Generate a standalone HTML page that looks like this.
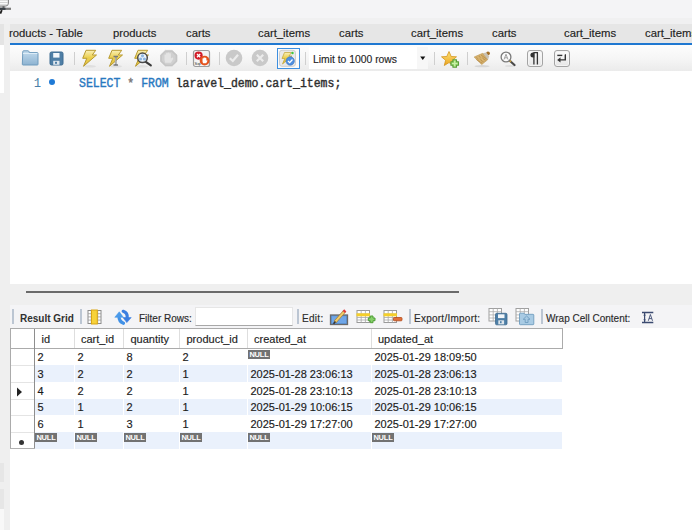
<!DOCTYPE html>
<html><head><meta charset="utf-8">
<style>
*{margin:0;padding:0;box-sizing:border-box}
html,body{width:692px;height:530px;overflow:hidden;background:#fff;font-family:"Liberation Sans",sans-serif;color:#222}
.a{position:absolute}
.t{position:absolute;white-space:pre;line-height:1;-webkit-text-stroke:.15px}
.sep{position:absolute;width:1px;background:#cfcfcf}
.null{position:absolute;width:22px;height:9px;background:#727272;color:#fff;font-size:7.5px;font-weight:bold;line-height:9px;text-align:center;letter-spacing:-.2px}
.rsep{position:absolute;width:2px;background:#bcc6d3}
</style></head><body>
<!-- top area -->
<div class="a" style="left:0;top:0;width:692px;height:18px;background:#f4f4f6"></div>
<div class="a" style="left:0;top:18px;width:692px;height:6px;background:#f0f0f1"></div>
<svg class="a" style="left:0;top:0" width="14" height="14" viewBox="0 0 14 14">
 <rect x="-4" y="-4" width="12.5" height="10.2" rx="3.2" fill="#d4d4d4" stroke="#8c8c8c" stroke-width="1"/>
 <path d="M-3 1.4 H7.5 M-3 3.6 H7.5" stroke="#fafafa" stroke-width="1.1"/>
 <rect x="2.5" y="6.3" width="2" height="1.6" fill="#5a5a5a"/>
 <rect x="0" y="7.7" width="11" height="2.2" fill="#7c7c7c"/>
 <rect x="0" y="7.7" width="5.5" height="2.2" fill="#3b4147"/>
 <path d="M0.3 13.6 L1.8 10.2" stroke="#1e1e1e" stroke-width="1.9"/>
</svg>
<!-- left strip -->
<div class="a" style="left:0;top:24px;width:10px;height:506px;background:#efefef"></div>
<div class="a" style="left:0;top:24px;width:4px;height:21px;background:#e4e4e4"></div>
<div class="a" style="left:0;top:45px;width:4px;height:48px;background:#fff"></div>
<div class="a" style="left:0;top:463px;width:4px;height:19px;background:#e6e6e6"></div>
<div class="a" style="left:0;top:489px;width:4px;height:20px;background:#e6e6e6"></div>
<div class="a" style="left:0;top:509px;width:4px;height:21px;background:#f8f8f8"></div>
<!-- tab bar -->
<div class="a" style="left:10px;top:24px;width:682px;height:19px;background:#e6e6e6"></div>
<div class="t" style="left:9px;top:28px;font-size:11.3px;color:#222">roducts - Table</div>
<div class="t" style="left:113px;top:28px;font-size:11.3px;color:#222">products</div>
<div class="t" style="left:186px;top:28px;font-size:11.3px;color:#222">carts</div>
<div class="t" style="left:258px;top:28px;font-size:11.3px;color:#222">cart_items</div>
<div class="t" style="left:339px;top:28px;font-size:11.3px;color:#222">carts</div>
<div class="t" style="left:411px;top:28px;font-size:11.3px;color:#222">cart_items</div>
<div class="t" style="left:492px;top:28px;font-size:11.3px;color:#222">carts</div>
<div class="t" style="left:564px;top:28px;font-size:11.3px;color:#222">cart_items</div>
<div class="t" style="left:645px;top:28px;font-size:11.3px;color:#222">cart_items</div>
<div class="a" style="left:10px;top:43px;width:682px;height:2px;background:#1f78d1"></div>
<!-- sql toolbar -->
<div class="a" style="left:10px;top:45px;width:682px;height:26px;background:linear-gradient(#fdfdfd,#f6f6f6 50%,#ebebeb)"></div>
<!-- folder -->
<svg class="a" style="left:20px;top:49px" width="20" height="18" viewBox="0 0 20 18">
 <defs><linearGradient id="gf" x1="0" y1="0" x2="0" y2="1"><stop offset="0" stop-color="#c4dcee"/><stop offset="1" stop-color="#8db3d1"/></linearGradient></defs>
 <path d="M2.8 2.5 Q2.8 1.8 3.5 1.8 H8 Q8.8 1.8 9 2.6 L9.3 3.6 H17.3 Q18 3.6 18 4.3 V15.3 Q18 16 17.3 16 H3 Q2.3 16 2.3 15.3 Z" fill="url(#gf)" stroke="#6e9bbd" stroke-width="1"/>
 <path d="M3 4.5 H17.3" stroke="#dcecf7" stroke-width="1"/>
</svg>
<!-- floppy -->
<svg class="a" style="left:49px;top:51px" width="15" height="15" viewBox="0 0 15 15">
 <rect x="1" y="1" width="13" height="13" rx="1.5" fill="#4f7fa6" stroke="#3f6d92" stroke-width="1"/>
 <rect x="4.2" y="2" width="6.3" height="4.6" fill="#f4f8fb"/>
 <rect x="4.2" y="9.8" width="6.3" height="4" fill="#dfe7ee"/>
 <rect x="6" y="10.8" width="2" height="2" fill="#4f7fa6"/>
</svg>
<div class="sep" style="left:74px;top:52px;height:13px"></div>
<!-- bolts -->
<svg width="0" height="0" style="position:absolute">
 <defs>
  <linearGradient id="gb" x1="0" y1="0" x2="0" y2="1"><stop offset="0" stop-color="#faf0b8"/><stop offset=".45" stop-color="#ecd050"/><stop offset="1" stop-color="#e2c040"/></linearGradient>
  <linearGradient id="gs" x1="0" y1="0" x2="0" y2="1"><stop offset="0" stop-color="#dfe3e8"/><stop offset="1" stop-color="#fbfbfb"/></linearGradient>
 </defs>
</svg>
<svg class="a" style="left:80px;top:48px" width="20" height="20" viewBox="0 0 20 20">
 <ellipse cx="10" cy="18.3" rx="6" ry="1.2" fill="#d8d8d8" opacity=".7"/>
 <path d="M6 2.3 H15.7 L12.3 7 H16.5 L3.5 18.3 L6.8 10.3 H2.7 Z" fill="url(#gb)" stroke="#b89a30" stroke-width="1" stroke-linejoin="round"/>
</svg>
<svg class="a" style="left:106px;top:48px" width="20" height="20" viewBox="0 0 20 20">
 <ellipse cx="10" cy="18.3" rx="6" ry="1.2" fill="#d8d8d8" opacity=".7"/>
 <path d="M6 2.3 H15.7 L12.3 7 H16.5 L3.5 18.3 L6.8 10.3 H2.7 Z" fill="url(#gb)" stroke="#b89a30" stroke-width="1" stroke-linejoin="round"/>
 <path d="M7.5 8.5 H12 M9.75 8.5 V17 M7.5 17 H12" stroke="#7a7a7a" stroke-width="1.6"/>
 <path d="M9.75 9.5 V16" stroke="#d0d0d0" stroke-width=".8"/>
</svg>
<svg class="a" style="left:132px;top:48px" width="22" height="20" viewBox="0 0 22 20">
 <ellipse cx="10" cy="18.3" rx="6" ry="1.2" fill="#d8d8d8" opacity=".7"/>
 <path d="M6 2.3 H15.7 L12.3 7 H16.5 L3.5 18.3 L6.8 10.3 H2.7 Z" fill="url(#gb)" stroke="#b89a30" stroke-width="1" stroke-linejoin="round"/>
 <path d="M13.8 13.8 L18.8 17.3" stroke="#3c3c3c" stroke-width="2.2" stroke-linecap="round"/>
 <circle cx="10.5" cy="9.8" r="4.8" fill="#eef4fa" stroke="#4a4a4a" stroke-width="1.5"/>
 <circle cx="8.6" cy="11" r="1.6" fill="#8fb8e2"/><circle cx="12.4" cy="11" r="1.6" fill="#8fb8e2"/><circle cx="10.5" cy="7.8" r="1.6" fill="#8fb8e2"/>
</svg>
<!-- stop gray -->
<svg class="a" style="left:159px;top:49px" width="20" height="18" viewBox="0 0 20 18">
 <path d="M6.3 1.4 H13.2 L18 6.1 V12.4 L13.2 17 H6.3 L1.5 12.4 V6.1 Z" fill="#c6c6c6" stroke="#c0c0c0" stroke-width=".6" stroke-linejoin="round"/>
 <path d="M6.8 2.9 H12.7 L16.5 6.7 V11.8 L12.7 15.5 H6.8 L3 11.8 V6.7 Z" fill="#d0d0d0"/>
 <path d="M6.2 13.8 Q5.2 11 5.5 8.3 V5.8 Q6.3 5 7.1 5.8 V4.3 Q7.9 3.6 8.7 4.3 V3.9 Q9.5 3.3 10.3 3.9 V4.5 Q11.1 3.9 11.9 4.6 V9.6 L13.3 8.6 Q14.5 8.5 14.2 9.9 L11.9 13.8 Z" fill="#e4e4e4"/>
</svg>
<div class="sep" style="left:186px;top:52px;height:13px"></div>
<!-- stop on error toggle -->
<svg class="a" style="left:192px;top:49px" width="20" height="19" viewBox="0 0 20 19">
 <rect x="1.5" y="1.5" width="16" height="16" rx="2" fill="#f4f4f4" stroke="#9c9c9c" stroke-width="1.2"/>
 <text x="2.6" y="16" font-size="4.2" font-family="Liberation Sans" fill="#333">Sql</text>
 <circle cx="6.6" cy="6.6" r="4.1" fill="#d21e2a"/>
 <path d="M5 5 L8.2 8.2 M8.2 5 L5 8.2" stroke="#fff" stroke-width="1.3"/>
 <circle cx="12.6" cy="11.6" r="4.9" fill="#e4521c"/>
 <path d="M11 14.3 Q10.3 12.5 10.5 11 V9.6 Q11 9.1 11.5 9.6 V8.8 Q12 8.3 12.5 8.8 V8.6 Q13 8.2 13.5 8.6 V9.1 Q14 8.7 14.4 9.2 V11.8 L15 11.3 Q15.6 11.3 15.4 12 L14.2 14.3 Z" fill="#fff"/>
</svg>
<div class="sep" style="left:219px;top:52px;height:13px"></div>
<svg class="a" style="left:224px;top:48px" width="20" height="20" viewBox="0 0 20 20">
 <circle cx="10" cy="10" r="8.3" fill="#c9c9c9"/>
 <path d="M5.8 10.3 L8.8 13 L14 6.8" stroke="#ececec" stroke-width="2.2" fill="none"/>
</svg>
<svg class="a" style="left:250px;top:48px" width="20" height="20" viewBox="0 0 20 20">
 <circle cx="10" cy="10" r="8.3" fill="#c9c9c9"/>
 <path d="M6.8 6.8 L13.2 13.2 M13.2 6.8 L6.8 13.2" stroke="#ececec" stroke-width="2.2"/>
</svg>
<!-- autocommit -->
<div class="a" style="left:277px;top:48px;width:23px;height:21px;border:1.5px solid #3d8fe0;background:#fafafa"></div>
<svg class="a" style="left:278px;top:49px" width="20" height="19" viewBox="0 0 20 19">
 <rect x="1.5" y="1.3" width="16" height="16" rx="2.5" fill="#e9e9e9" stroke="#cfcfcf" stroke-width="1"/>
 <path d="M6.5 3.5 H13.5 L11 7 H14 L4.5 15 L6.8 9.5 H4 Z" fill="url(#gb)" stroke="#c0a030" stroke-width=".7"/>
 <circle cx="14.5" cy="4" r="1.2" fill="#3cc83c"/>
 <circle cx="12.2" cy="12" r="4.2" fill="#4f8fe0" stroke="#3a74c0" stroke-width=".6"/>
 <path d="M10 12 L11.7 13.6 L14.5 10.5" stroke="#fff" stroke-width="1.3" fill="none"/>
</svg>
<div class="sep" style="left:305px;top:52px;height:13px"></div>
<!-- limit combo -->
<div class="a" style="left:309px;top:47px;width:119px;height:22px;background:#fff"></div>
<div class="a" style="left:417px;top:47px;width:11px;height:22px;background:#f7f7f7"></div>
<div class="t" style="left:313px;top:54px;font-size:11.5px;color:#1e1e1e;transform-origin:0 0;transform:scaleX(.9)">Limit to 1000 rows</div>
<svg class="a" style="left:420px;top:56px" width="6" height="5" viewBox="0 0 6 5"><path d="M0.2 0.5 H5.3 L2.75 4 Z" fill="#111"/></svg>
<div class="sep" style="left:434px;top:52px;height:13px"></div>
<!-- star add -->
<svg class="a" style="left:440px;top:49px" width="22" height="20" viewBox="0 0 22 20">
 <defs><linearGradient id="gst" x1="0" y1="0" x2="0" y2="1"><stop offset="0" stop-color="#fde57a"/><stop offset="1" stop-color="#eba21c"/></linearGradient></defs>
 <path d="M9 2.5 L11.2 7.5 L16.5 7.8 L12.4 11.3 L13.8 16.5 L9 13.6 L4.3 16.5 L5.6 11.3 L1.5 7.8 L6.8 7.5 Z" fill="url(#gst)" stroke="#d4941a" stroke-width=".8" stroke-linejoin="round"/>
 <path d="M10.9 12.7 H12.9 V10.7 H16.5 V12.7 H18.5 V16.3 H16.5 V18.3 H12.9 V16.3 H10.9 Z" fill="#9ad870" stroke="#5b9e3c" stroke-width="1.1" stroke-linejoin="round"/><path d="M14.7 11.8 V17.2 M12 14.5 H17.4" stroke="#c8f0a8" stroke-width="1.2"/>
</svg>
<div class="sep" style="left:467px;top:52px;height:13px"></div>
<!-- broom -->
<svg class="a" style="left:472px;top:49px" width="20" height="19" viewBox="0 0 20 19">
 <ellipse cx="10" cy="17.2" rx="7.5" ry="1.1" fill="#cfcfcf" opacity=".8"/>
 <circle cx="16" cy="4.3" r="1.9" fill="#a46f26"/>
 <path d="M10.5 4.2 L14.2 3.6 L17.2 7.2 L15.8 11.2 Z" fill="#c9c2b4"/>
 <path d="M2.1 8 L10.6 4.3 L15.6 10.8 L9.7 15.6 Z" fill="#d3ad68" stroke="#c09a58" stroke-width=".6" stroke-linejoin="round"/>
 <path d="M4.5 8.5 L11.5 12.8 M7 7 L13.6 11.2 M4.3 10.5 L10.3 14.3 M9 6 L14.5 10" stroke="#b48a48" stroke-width=".7"/>
 <path d="M5.5 7.7 L8.7 12.5 M8.2 6.2 L11.2 11.8" stroke="#e8c888" stroke-width=".6"/>
</svg>
<!-- magnifier -->
<svg class="a" style="left:499px;top:49px" width="19" height="19" viewBox="0 0 19 19">
 <ellipse cx="11" cy="17" rx="5" ry="1" fill="#d8d8d8" opacity=".7"/>
 <path d="M10.5 11.5 L15.5 16" stroke="#4a4a4a" stroke-width="2.2" stroke-linecap="round"/>
 <path d="M10.5 11.5 L12 12.8" stroke="#c8a040" stroke-width="2"/>
 <circle cx="7" cy="8" r="4.9" fill="#fbfbfb" stroke="#7a7a7a" stroke-width="1.3"/>
 <path d="M5 10.5 L7 5.2 L9 10.5 M5.8 8.8 H8.2" stroke="#999" stroke-width=".9" fill="none"/>
</svg>
<!-- pilcrow -->
<div class="a" style="left:527px;top:50px;width:16px;height:17px;border:1px solid #a4a4a4;border-radius:3px;background:linear-gradient(#fcfcfc,#e6e6e6);box-shadow:inset 0 0 0 1px #f4f4f4"></div>
<svg class="a" style="left:527px;top:50px" width="16" height="17" viewBox="0 0 16 17">
 <path d="M7.3 2.5 H6 Q3.4 2.5 3.4 5 Q3.4 7.5 6 7.5 H7.3 Z" fill="#333"/>
 <path d="M6.9 2.5 V14.5 M10.4 2.5 V14.5 M6.5 2.6 H11" stroke="#333" stroke-width="1.3"/>
</svg>
<!-- wrap -->
<div class="a" style="left:554px;top:50px;width:16px;height:17px;border:1px solid #a4a4a4;border-radius:3px;background:linear-gradient(#fcfcfc,#e6e6e6);box-shadow:inset 0 0 0 1px #f4f4f4"></div>
<svg class="a" style="left:554px;top:50px" width="16" height="17" viewBox="0 0 16 17">
 <path d="M3.3 5.4 H8.3" stroke="#333" stroke-width="1.4"/>
 <path d="M10.8 5 H11.3 V9.9 H5.5" stroke="#333" stroke-width="1.4" fill="none"/>
 <path d="M3.2 9.9 L6.5 7.3 V12.5 Z" fill="#333"/>
</svg>
<!-- editor -->
<div class="a" style="left:10px;top:71px;width:682px;height:213px;background:#fff"></div>
<div class="t" style="left:34px;top:78px;font-size:12.5px;font-family:'Liberation Mono';color:#4a7fa8;transform-origin:0 0;transform:scaleX(.92)">1</div>
<div class="a" style="left:49px;top:79px;width:6px;height:6px;border-radius:50%;background:#1f7ad6"></div>
<div class="t" style="left:79px;top:78px;font-size:12.5px;font-family:'Liberation Mono';color:#2e2e2e;-webkit-text-stroke:.4px;transform-origin:0 0;transform:scaleX(.92)"><span style="color:#2878c0">SELECT</span> <span style="color:#777">*</span> <span style="color:#2878c0">FROM</span> laravel_demo.cart_items;</div>
<!-- splitter -->
<div class="a" style="left:10px;top:284px;width:682px;height:21px;background:#efefef"></div>
<div class="a" style="left:26px;top:291px;width:433px;height:2px;background:#6a6a6a"></div>
<!-- result toolbar -->
<div class="a" style="left:10px;top:305px;width:682px;height:23px;background:#f4f4f6"></div>
<div class="rsep" style="left:12px;top:309px;height:15px"></div>
<div class="t" style="left:20px;top:314px;font-size:10px;font-weight:bold;color:#303030;-webkit-text-stroke:0">Result Grid</div>
<div class="rsep" style="left:80px;top:309px;height:15px"></div>
<!-- grid icon -->
<svg class="a" style="left:87px;top:309px" width="15" height="16" viewBox="0 0 15 16">
 <rect x="1" y="1.5" width="13" height="13" fill="#fff" stroke="#8c8c8c" stroke-width="1"/>
 <path d="M1 4.7 H14 M1 7.9 H14 M1 11.1 H14 M4.3 1.5 V14.5 M10.7 1.5 V14.5" stroke="#9a9a9a" stroke-width=".8"/>
 <rect x="4.5" y="1" width="5.8" height="14" fill="#f7d23a" stroke="#d9a514" stroke-width="1"/>
</svg>
<!-- refresh -->
<svg class="a" style="left:110px;top:306px" width="26" height="22" viewBox="0 0 26 22">
 <path d="M9 10 Q8.8 15.5 13.5 17.3" stroke="#4191e6" stroke-width="3.2" fill="none" stroke-linecap="round"/>
 <path d="M9.3 5.8 L4.8 11.3 L13.3 11.3 Z" fill="#4a9aea" stroke="#4a9aea" stroke-width=".6" stroke-linejoin="round"/>
 <path d="M13.2 5.3 Q17.8 6.8 17.2 12" stroke="#3a7ee0" stroke-width="3.2" fill="none" stroke-linecap="round"/>
 <path d="M13 11.6 L21.2 11.6 L16.8 16.6 Z" fill="#3a7ee0" stroke="#3a7ee0" stroke-width=".6" stroke-linejoin="round"/>
</svg>
<div class="t" style="left:139px;top:314px;font-size:10px;color:#2a2a2a">Filter Rows:</div>
<div class="a" style="left:195px;top:307px;width:98px;height:19px;background:#fff;border:1px solid #e6e6e6;border-bottom:1px solid #a8a8a8"></div>
<div class="rsep" style="left:297px;top:309px;height:15px"></div>
<div class="t" style="left:302px;top:314px;font-size:10px;color:#2a2a2a;letter-spacing:.3px">Edit:</div>
<!-- edit pencil -->
<svg class="a" style="left:329px;top:308px" width="20" height="18" viewBox="0 0 20 18">
 <rect x="1.5" y="7" width="17" height="9.5" fill="#5b94d8" stroke="#6a6a6a" stroke-width="1.3"/>
 <rect x="3" y="8.3" width="14" height="6.8" fill="#6fa6e8"/>
 <path d="M6 14 L15.5 3.3" stroke="#a0782a" stroke-width="3.2"/>
 <path d="M6 14 L15.5 3.3" stroke="#f2cc6a" stroke-width="2"/>
 <path d="M14.8 4 L16.3 2.4" stroke="#e03a3a" stroke-width="3"/>
 <path d="M4.5 15.8 L6.5 13.5" stroke="#333" stroke-width="1.6"/>
</svg>
<!-- add row -->
<svg class="a" style="left:355px;top:309px" width="22" height="16" viewBox="0 0 22 16">
 <rect x="2" y="1.5" width="12.5" height="12" fill="#fff" stroke="#9a9a9a" stroke-width="1"/>
 <path d="M2 5 H14.5 M2 8.5 H14.5 M2 11 H14.5 M6.2 1.5 V13.5 M10.4 1.5 V13.5" stroke="#a8a8a8" stroke-width=".8"/>
 <rect x="1.5" y="4.3" width="13.5" height="3" fill="#f5cf2a"/>
 <path d="M13.3 9 H15.3 V7 H18 V9 H20 V11.7 H18 V13.7 H15.3 V11.7 H13.3 Z" fill="#86d06a" stroke="#4f9e36" stroke-width="1"/>
</svg>
<!-- delete row -->
<svg class="a" style="left:382px;top:309px" width="22" height="16" viewBox="0 0 22 16">
 <rect x="2" y="1.5" width="12.5" height="12" fill="#fff" stroke="#9a9a9a" stroke-width="1"/>
 <path d="M2 5 H14.5 M2 8.5 H14.5 M2 11 H14.5 M6.2 1.5 V13.5 M10.4 1.5 V13.5" stroke="#a8a8a8" stroke-width=".8"/>
 <rect x="1.5" y="4.3" width="13.5" height="3" fill="#f5cf2a"/>
 <rect x="11.5" y="8.5" width="8.5" height="3.3" rx=".8" fill="#e0703a" stroke="#b24a1a" stroke-width=".8"/>
</svg>
<div class="rsep" style="left:409px;top:309px;height:15px"></div>
<div class="t" style="left:414px;top:314px;font-size:10px;color:#2a2a2a;letter-spacing:.25px">Export/Import:</div>
<!-- export -->
<svg class="a" style="left:488px;top:307px" width="21" height="19" viewBox="0 0 21 19">
 <rect x="1" y="1.5" width="12.5" height="12.5" fill="#fff" stroke="#a0a0a0" stroke-width="1"/>
 <path d="M1 4.7 H13.5 M1 7.9 H13.5 M1 11 H13.5 M5.2 1.5 V14 M9.4 1.5 V14" stroke="#acacac" stroke-width=".8"/>
 <rect x="7.5" y="6.3" width="11.5" height="11.5" rx="1.2" fill="#4d7ea6" stroke="#3f6a8e" stroke-width=".8"/>
 <rect x="10" y="7.3" width="6.5" height="3.8" fill="#f2f6f9"/>
 <rect x="10.3" y="13.3" width="5.8" height="4" fill="#dde5ec"/>
 <rect x="12" y="14.2" width="1.6" height="2" fill="#4d7ea6"/>
</svg>
<!-- import -->
<svg class="a" style="left:515px;top:307px" width="21" height="19" viewBox="0 0 21 19">
 <rect x="1" y="1.5" width="12.5" height="12.5" fill="#fff" stroke="#a0a0a0" stroke-width="1"/>
 <path d="M1 4.7 H13.5 M1 7.9 H13.5 M1 11 H13.5 M5.2 1.5 V14 M9.4 1.5 V14" stroke="#acacac" stroke-width=".8"/>
 <path d="M4.5 7 Q4.5 6.2 5.3 6.2 H9 L9.8 7.3 H18 Q18.8 7.3 18.8 8 V17 Q18.8 17.7 18 17.7 H5.3 Q4.5 17.7 4.5 17 Z" fill="#a9cbe4" stroke="#6f9dc0" stroke-width=".9"/>
 <path d="M11.6 9 L15 12.3 H13 V15.5 H10.2 V12.3 H8.2 Z" fill="none" stroke="#6f9dc0" stroke-width=".9"/>
</svg>
<div class="rsep" style="left:541px;top:309px;height:15px"></div>
<div class="t" style="left:546px;top:314px;font-size:10px;color:#2a2a2a">Wrap Cell Content:</div>
<!-- wrap cell -->
<svg class="a" style="left:641px;top:311px" width="14" height="13" viewBox="0 0 14 13">
 <path d="M1 1.5 H12.3 M1 11.5 H12.3" stroke="#3b4a70" stroke-width="1.3"/>
 <path d="M3.6 2 V11" stroke="#3b4a70" stroke-width="1.2"/>
 <path d="M2.2 4.6 L3.6 2.8 L5 4.6 Z M2.2 8.4 L3.6 10.2 L5 8.4 Z" fill="#3b4a70"/>
 <path d="M7.3 9.8 L9.4 3.5 L11.5 9.8 M8.1 7.6 H10.7" stroke="#3b4a70" stroke-width=".9" fill="none"/>
</svg>

<!-- grid area -->
<div class="a" style="left:10px;top:328px;width:682px;height:202px;background:#fff"></div>
<div class="a" style="left:10px;top:328px;width:553px;height:21px;border:1px solid #ababab;background:#fff"></div>
<div class="a" style="left:74px;top:329px;width:1px;height:19px;background:#dedede"></div>
<div class="a" style="left:123px;top:329px;width:1px;height:19px;background:#dedede"></div>
<div class="a" style="left:179px;top:329px;width:1px;height:19px;background:#dedede"></div>
<div class="a" style="left:247px;top:329px;width:1px;height:19px;background:#dedede"></div>
<div class="a" style="left:371px;top:329px;width:1px;height:19px;background:#dedede"></div>
<div class="a" style="left:34px;top:329px;width:1px;height:120px;background:#8e8e8e"></div>
<div class="a" style="left:10px;top:328px;width:1px;height:121px;background:#ababab"></div>
<div class="t" style="left:41.5px;top:334px;font-size:11px;color:#1e1e1e">id</div>
<div class="t" style="left:81px;top:334px;font-size:11px;color:#1e1e1e">cart_id</div>
<div class="t" style="left:130.5px;top:334px;font-size:11px;color:#1e1e1e">quantity</div>
<div class="t" style="left:186.5px;top:334px;font-size:11px;color:#1e1e1e">product_id</div>
<div class="t" style="left:254px;top:334px;font-size:11px;color:#1e1e1e">created_at</div>
<div class="t" style="left:378px;top:334px;font-size:11px;color:#1e1e1e">updated_at</div>
<div class="a" style="left:11px;top:365px;width:23px;height:1px;background:#e4e4e4"></div>
<div class="t" style="left:37.5px;top:352.40px;font-size:11px;color:#1a1a1a">2</div>
<div class="t" style="left:77.5px;top:352.40px;font-size:11px;color:#1a1a1a">2</div>
<div class="t" style="left:126.5px;top:352.40px;font-size:11px;color:#1a1a1a">8</div>
<div class="t" style="left:182.5px;top:352.40px;font-size:11px;color:#1a1a1a">2</div>
<div class="null" style="left:248px;top:350px">NULL</div>
<div class="t" style="left:374.5px;top:352.40px;font-size:11px;color:#1a1a1a">2025-01-29 18:09:50</div>
<div class="a" style="left:35px;top:365px;width:527px;height:17px;background:#eaf1fc"></div>
<div class="a" style="left:74px;top:365px;width:1px;height:17px;background:#fff"></div>
<div class="a" style="left:123px;top:365px;width:1px;height:17px;background:#fff"></div>
<div class="a" style="left:179px;top:365px;width:1px;height:17px;background:#fff"></div>
<div class="a" style="left:247px;top:365px;width:1px;height:17px;background:#fff"></div>
<div class="a" style="left:371px;top:365px;width:1px;height:17px;background:#fff"></div>
<div class="a" style="left:11px;top:382px;width:23px;height:1px;background:#e4e4e4"></div>
<div class="t" style="left:37.5px;top:369.07px;font-size:11px;color:#1a1a1a">3</div>
<div class="t" style="left:77.5px;top:369.07px;font-size:11px;color:#1a1a1a">2</div>
<div class="t" style="left:126.5px;top:369.07px;font-size:11px;color:#1a1a1a">2</div>
<div class="t" style="left:182.5px;top:369.07px;font-size:11px;color:#1a1a1a">1</div>
<div class="t" style="left:250.5px;top:369.07px;font-size:11px;color:#1a1a1a">2025-01-28 23:06:13</div>
<div class="t" style="left:374.5px;top:369.07px;font-size:11px;color:#1a1a1a">2025-01-28 23:06:13</div>
<div class="a" style="left:11px;top:399px;width:23px;height:1px;background:#e4e4e4"></div>
<div class="t" style="left:37.5px;top:385.73px;font-size:11px;color:#1a1a1a">4</div>
<div class="t" style="left:77.5px;top:385.73px;font-size:11px;color:#1a1a1a">2</div>
<div class="t" style="left:126.5px;top:385.73px;font-size:11px;color:#1a1a1a">2</div>
<div class="t" style="left:182.5px;top:385.73px;font-size:11px;color:#1a1a1a">1</div>
<div class="t" style="left:250.5px;top:385.73px;font-size:11px;color:#1a1a1a">2025-01-28 23:10:13</div>
<div class="t" style="left:374.5px;top:385.73px;font-size:11px;color:#1a1a1a">2025-01-28 23:10:13</div>
<div class="a" style="left:35px;top:399px;width:527px;height:16px;background:#eaf1fc"></div>
<div class="a" style="left:74px;top:399px;width:1px;height:16px;background:#fff"></div>
<div class="a" style="left:123px;top:399px;width:1px;height:16px;background:#fff"></div>
<div class="a" style="left:179px;top:399px;width:1px;height:16px;background:#fff"></div>
<div class="a" style="left:247px;top:399px;width:1px;height:16px;background:#fff"></div>
<div class="a" style="left:371px;top:399px;width:1px;height:16px;background:#fff"></div>
<div class="a" style="left:11px;top:415px;width:23px;height:1px;background:#e4e4e4"></div>
<div class="t" style="left:37.5px;top:402.40px;font-size:11px;color:#1a1a1a">5</div>
<div class="t" style="left:77.5px;top:402.40px;font-size:11px;color:#1a1a1a">1</div>
<div class="t" style="left:126.5px;top:402.40px;font-size:11px;color:#1a1a1a">2</div>
<div class="t" style="left:182.5px;top:402.40px;font-size:11px;color:#1a1a1a">1</div>
<div class="t" style="left:250.5px;top:402.40px;font-size:11px;color:#1a1a1a">2025-01-29 10:06:15</div>
<div class="t" style="left:374.5px;top:402.40px;font-size:11px;color:#1a1a1a">2025-01-29 10:06:15</div>
<div class="a" style="left:11px;top:432px;width:23px;height:1px;background:#e4e4e4"></div>
<div class="t" style="left:37.5px;top:419.07px;font-size:11px;color:#1a1a1a">6</div>
<div class="t" style="left:77.5px;top:419.07px;font-size:11px;color:#1a1a1a">1</div>
<div class="t" style="left:126.5px;top:419.07px;font-size:11px;color:#1a1a1a">3</div>
<div class="t" style="left:182.5px;top:419.07px;font-size:11px;color:#1a1a1a">1</div>
<div class="t" style="left:250.5px;top:419.07px;font-size:11px;color:#1a1a1a">2025-01-29 17:27:00</div>
<div class="t" style="left:374.5px;top:419.07px;font-size:11px;color:#1a1a1a">2025-01-29 17:27:00</div>
<div class="a" style="left:35px;top:432px;width:527px;height:17px;background:#eaf1fc"></div>
<div class="a" style="left:74px;top:432px;width:1px;height:17px;background:#fff"></div>
<div class="a" style="left:123px;top:432px;width:1px;height:17px;background:#fff"></div>
<div class="a" style="left:179px;top:432px;width:1px;height:17px;background:#fff"></div>
<div class="a" style="left:247px;top:432px;width:1px;height:17px;background:#fff"></div>
<div class="a" style="left:371px;top:432px;width:1px;height:17px;background:#fff"></div>
<div class="null" style="left:35px;top:433px">NULL</div>
<div class="null" style="left:75px;top:433px">NULL</div>
<div class="null" style="left:124px;top:433px">NULL</div>
<div class="null" style="left:180px;top:433px">NULL</div>
<div class="null" style="left:248px;top:433px">NULL</div>
<div class="null" style="left:372px;top:433px">NULL</div>
<div class="a" style="left:10px;top:448px;width:25px;height:1px;background:#b0b0b0"></div>
<svg class="a" style="left:16px;top:387px" width="8" height="10" viewBox="0 0 8 10"><path d="M1 0.5 L6 5 L1 9.5 Z" fill="#222"/></svg>
<div class="a" style="left:19px;top:440px;width:5px;height:5px;border-radius:50%;background:#333"></div>
</body></html>
